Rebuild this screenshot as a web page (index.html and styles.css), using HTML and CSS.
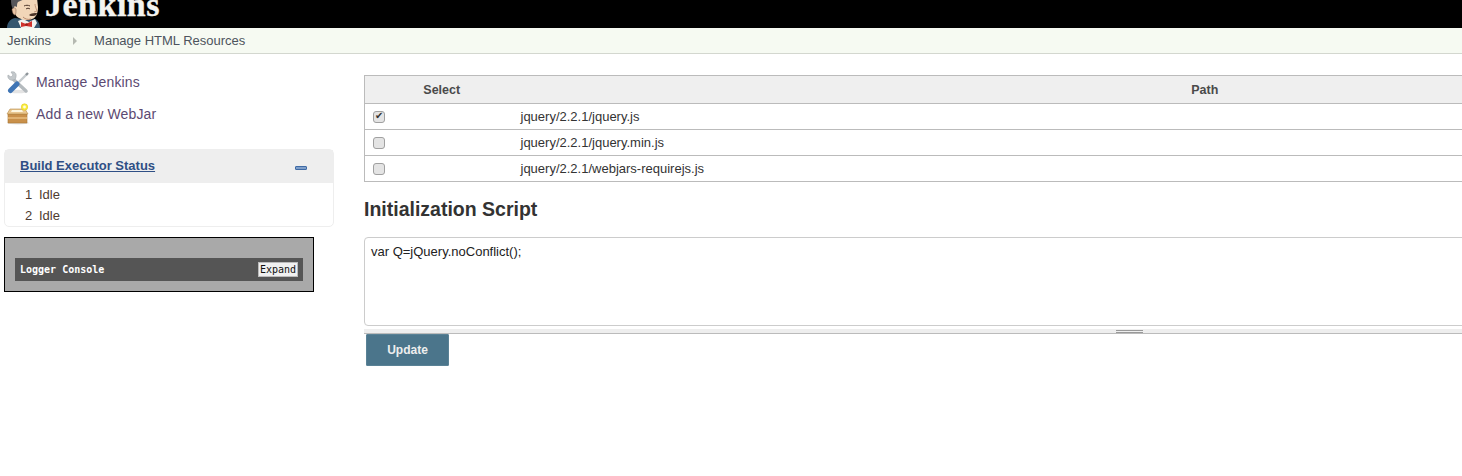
FILE: index.html
```html
<!DOCTYPE html>
<html lang="en">
<head>
    <meta charset="UTF-8">
    <title>Manage HTML Resources [Jenkins]</title>
    <link rel="stylesheet" href="styles.css">
</head>
<body>
    <!-- Header -->
    <div class="page-head">
        <svg class="butler" width="34" height="28" viewBox="0 0 34 28">
            <path d="M1 28c0-5 3-9 8-10l14 2 6-1c3 1 5 5 5 9z" fill="#35566e"/>
            <path d="M12 21l5-2 6 3 6-3 2 4-3 5H15z" fill="#f2f2ee"/>
            <path d="M7 -2h24l1 9c0 6-2 11-6 12-4 2-10 1-13-1C9 16 6 10 7 -2z" fill="#f1d6b8"/>
            <path d="M5 -2h13c0 2-4 3-6 4-1 1-1 3-1 5-2-1-3-1-3 1l-1 1C5 6 5 2 5 -2z" fill="#56565a"/>
            <path d="M6 9c2-2 4-1 4 1s0 4-1 5c-2 0-3-4-3-6z" fill="#e8c4a4" stroke="#7a5a48" stroke-width=".5"/>
            <path d="M18 6c2-1 4-1 6 0" fill="none" stroke="#4a3428" stroke-width="1"/>
            <path d="M20 9c1-1 3-1 4 0" fill="none" stroke="#4a3428" stroke-width="1"/>
            <path d="M29 4c0 2 1 4 2 7l-3 1" fill="none" stroke="#b98a6c" stroke-width=".8"/>
            <path d="M23 15c2-2 6-2 8-2 0 2-2 3-4 3s-3 0-4-1z" fill="#4a3428"/>
            <path d="M17 17c2 2 5 3 8 2" fill="none" stroke="#a87458" stroke-width=".8"/>
            <path d="M15 22l5 2 6-3v6l-6-1-5 1z" fill="#d0322c"/>
            <circle cx="20.5" cy="24.5" r="1.3" fill="#9a1f1a"/>
        </svg>
        <span class="brand-name">Jenkins</span>
    </div>

    <!-- Breadcrumbs -->
    <div class="breadcrumbs">
        <a href="#">Jenkins</a>
        <span class="crumb-arrow"></span>
        <a href="#">Manage HTML Resources</a>
    </div>

    <div class="page-body">
        <!-- Side panel -->
        <div class="side-panel">
            <div class="task">
                <svg width="24" height="24" viewBox="0 0 24 24">
                    <ellipse cx="12" cy="21.5" rx="10" ry="1.8" fill="#e4e4e4"/>
                    <path d="M6.5 8.5L20 21" stroke="#b4babe" stroke-width="3.4" stroke-linecap="round"/>
                    <path d="M2 5l3 2 2-2-2-3c3-1 6 1 5 5 0 1-1 3-3 3-3 1-6-2-5-5z" fill="#c3c8cb" stroke="#9aa0a4" stroke-width=".5"/>
                    <path d="M11 14L21 4" stroke="#c6cbce" stroke-width="2.4"/>
                    <path d="M20 5l2-2" stroke="#8d9499" stroke-width="2.4"/>
                    <path d="M4.5 20.5L11 14" stroke="#3f75b5" stroke-width="5" stroke-linecap="round"/>
                </svg>
                <a href="#">Manage Jenkins</a>
            </div>
            <div class="task">
                <svg width="24" height="24" viewBox="0 0 24 24">
                    <ellipse cx="12" cy="21" rx="11" ry="1.5" fill="#e4e4e4"/>
                    <path d="M2 12h19v9H2z" fill="#c9904a" stroke="#a87632" stroke-width=".6"/>
                    <path d="M2 15h19v2H2z" fill="#e0b272"/>
                    <path d="M1 12l3-5h15l3 5z" fill="#e9c68f" stroke="#b58a48" stroke-width=".6"/>
                    <path d="M6 8h10l1 2H5z" fill="#fdf6df"/>
                    <circle cx="18.5" cy="5" r="3.2" fill="#f9ee3e" stroke="#e3c81f" stroke-width=".6"/>
                    <circle cx="18.5" cy="5" r="1.4" fill="#fffde0"/>
                </svg>
                <a href="#">Add a new WebJar</a>
            </div>

            <div class="executors">
                <div class="executors-head">
                    <a href="#">Build Executor Status</a>
                    <span class="collapse-btn"></span>
                </div>
                <div class="executor-row"><span class="executor-num">1</span>Idle</div>
                <div class="executor-row"><span class="executor-num">2</span>Idle</div>
            </div>

            <div class="logger">
                <div class="logger-bar">
                    <span>Logger Console</span>
                    <button type="button" class="logger-btn">Expand</button>
                </div>
            </div>
        </div>

        <!-- Main panel -->
        <div class="main-panel">
            <table class="resources">
                <thead>
                    <tr><th class="col-select">Select</th><th>Path</th></tr>
                </thead>
                <tbody>
                    <tr><td><input type="checkbox" checked></td><td>jquery/2.2.1/jquery.js</td></tr>
                    <tr><td><input type="checkbox"></td><td>jquery/2.2.1/jquery.min.js</td></tr>
                    <tr><td><input type="checkbox"></td><td>jquery/2.2.1/webjars-requirejs.js</td></tr>
                </tbody>
            </table>

            <h2>Initialization Script</h2>

            <div class="script-box">
                <textarea spellcheck="false">var Q=jQuery.noConflict();</textarea>
                <div class="grippie"><span></span></div>
            </div>

            <button type="submit" class="update-btn">Update</button>
        </div>
    </div>
</body>
</html>
```

FILE: styles.css
```css
* {
    box-sizing: border-box;
    margin: 0;
    padding: 0;
}

html, body {
    height: 476px;
    overflow: hidden;
}

body {
    font-family: "Liberation Sans", Arial, sans-serif;
    font-size: 13px;
    color: #333;
    background: #fff;
}

a {
    text-decoration: none;
}

/* Header */
.page-head {
    display: flex;
    height: 28px;
    overflow: hidden;
    background: #000;
    padding-left: 6px;
}

.brand-name {
    margin: -15px 0 0 5px;
    font-family: "Liberation Serif", "Times New Roman", serif;
    font-size: 34px;
    font-weight: bold;
    line-height: 40px;
    letter-spacing: .5px;
    color: #f4f4f0;
    -webkit-text-stroke: .4px #f4f4f0;
}

/* Breadcrumbs */
.breadcrumbs {
    display: flex;
    align-items: center;
    height: 26px;
    padding-left: 7px;
    background: #f6faf2;
    border-bottom: 1px solid #d3d7cf;
}

.breadcrumbs a {
    color: #4d545d;
}

.crumb-arrow {
    width: 0;
    height: 0;
    margin: 1px 17px 0 22px;
    border-left: 4px solid #b5b9b1;
    border-top: 4px solid transparent;
    border-bottom: 4px solid transparent;
}

.page-body {
    display: flex;
}

/* Side panel */
.side-panel {
    width: 364px;
    flex-shrink: 0;
    padding: 16px 0 0 4px;
}

.task {
    display: flex;
    align-items: center;
    gap: 6px;
    height: 24px;
    margin: 0 0 8px 2px;
    font-size: 14px;
    letter-spacing: .14px;
}

.task a {
    color: #5c4a72;
}

.executors {
    width: 330px;
    height: 78px;
    margin-top: 23px;
    border: 1px solid #eee;
    border-radius: 5px;
}

.executors-head {
    display: flex;
    align-items: center;
    justify-content: space-between;
    height: 33px;
    padding: 0 25px 2px 15px;
    background: #eee;
}

.executors-head a {
    font-weight: bold;
    color: #2f4f85;
    text-decoration: underline;
}

.collapse-btn {
    width: 12px;
    height: 4px;
    margin-top: 4px;
    margin-right: 1px;
    background: #7f9fc9;
    border: 1px solid #3e6aa5;
    border-radius: 1px;
}

.executor-row {
    height: 21px;
    line-height: 23px;
    padding-left: 20px;
    color: #4e3b30;
}

.executor-num {
    display: inline-block;
    width: 14px;
}

.logger {
    width: 310px;
    height: 55px;
    margin-top: 10px;
    padding: 20px 10px 0;
    background: #a9a9a9;
    border: 1px solid #000;
}

.logger-bar {
    display: flex;
    align-items: center;
    justify-content: space-between;
    height: 23px;
    padding: 0 5px;
    background: #555;
    font-family: "DejaVu Sans Mono", monospace;
    font-size: 10px;
    font-weight: bold;
    color: #fff;
}

.logger-btn {
    width: 40px;
    height: 15px;
    font-family: "DejaVu Sans Mono", monospace;
    font-size: 10px;
    line-height: 13px;
    color: #111;
    background: #f0f0f0;
    border: 1px solid #bbb;
}

/* Main panel */
.main-panel {
    flex: 1;
    min-width: 0;
    padding-top: 21px;
}

.resources {
    width: 1528px;
    border-collapse: collapse;
    table-layout: fixed;
    border: 1px solid #bbb;
}

.resources th {
    height: 28px;
    background: #efefef;
    font-weight: bold;
    font-size: 12.5px;
    color: #4a4a4a;
    border-bottom: 1px solid #bbb;
}

.resources .col-select {
    width: 154px;
}

.resources td {
    height: 26px;
    font-size: 13px;
    color: #333;
    border-bottom: 1px solid #bbb;
}

.resources td:first-child {
    padding-left: 8px;
}

.resources td:last-child {
    padding-left: 2px;
}

.resources input {
    position: relative;
    display: block;
    width: 12px;
    height: 12px;
    appearance: none;
    background: #e4e4e4;
    border: 1px solid #a0a0a0;
    border-radius: 3px;
}

.resources input:checked::after {
    content: "\2714";
    position: absolute;
    left: 1px;
    top: -2px;
    font-size: 10px;
    line-height: 12px;
    color: #333;
}

h2 {
    margin: 16px 0 16px;
    font-size: 19.5px;
    line-height: 23px;
    color: #333;
}

.script-box {
    width: 1528px;
    border-bottom: 1px solid #bbb;
}

.script-box textarea {
    display: block;
    width: 100%;
    height: 89px;
    padding: 6px;
    font-family: "Liberation Sans", Arial, sans-serif;
    font-size: 13px;
    line-height: 15px;
    color: #222;
    border: 1px solid #ccc;
    border-radius: 4px;
    outline: none;
    resize: none;
}

.grippie {
    height: 7px;
    padding: 4px 0 0 752px;
    background: linear-gradient(#fff 3px, #eee 3px);
}

.grippie span {
    display: block;
    width: 27px;
    height: 3px;
    border-top: 1px solid #999;
    border-bottom: 1px solid #999;
}

.update-btn {
    display: block;
    width: 83px;
    height: 32px;
    margin: 0 0 0 2px;
    font-family: "Liberation Sans", Arial, sans-serif;
    font-size: 12px;
    font-weight: bold;
    color: #eee;
    background: #4b758b;
    border: 1px solid #5a8296;
    border-radius: 1px;
}
```
